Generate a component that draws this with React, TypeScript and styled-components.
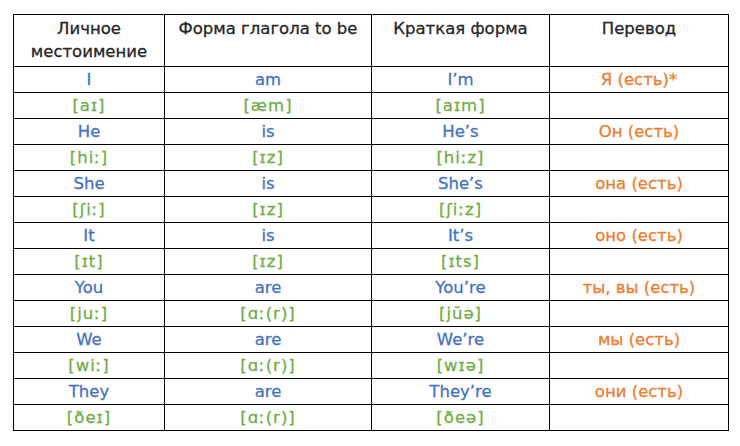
import styled, { createGlobalStyle } from 'styled-components';

const GlobalStyle = createGlobalStyle`
	html, body {
		margin: 0;
		padding: 0;
		background: #ffffff;
	}
	body {
		font-family: 'DejaVu Sans', Verdana, sans-serif;
	}
`;

type Tone = 'blue' | 'green' | 'orange';

const tones: Record<Tone, string> = {
	blue: '#4472c4',
	green: '#70ad47',
	orange: '#ed7d31',
};

const rows: [string, string, string, string][] = [
	['I', 'am', 'I’m', 'Я (есть)*'],
	['He', 'is', 'He’s', 'Он (есть)'],
	['She', 'is', 'She’s', 'она (есть)'],
	['It', 'is', 'It’s', 'оно (есть)'],
	['You', 'are', 'You’re', 'ты, вы (есть)'],
	['We', 'are', 'We’re', 'мы (есть)'],
	['They', 'are', 'They’re', 'они (есть)'],
];

const sounds: [string, string, string][] = [
	['[aɪ]', '[æm]', '[aɪm]'],
	['[hiː]', '[ɪz]', '[hiːz]'],
	['[ʃiː]', '[ɪz]', '[ʃiːz]'],
	['[ɪt]', '[ɪz]', '[ɪts]'],
	['[juː]', '[ɑː(r)]', '[jŭə]'],
	['[wiː]', '[ɑː(r)]', '[wɪə]'],
	['[ðeɪ]', '[ɑː(r)]', '[ðeə]'],
];

function App() {
	return (
		<>
			<GlobalStyle />
			<Page>
				<Table>
					<colgroup>
						<col style={{ width: 151 }} />
						<col style={{ width: 207 }} />
						<col style={{ width: 178 }} />
						<col style={{ width: 179 }} />
					</colgroup>
					<thead>
						<tr>
							<HeadCell>
								Личное
								<br />
								местоимение
							</HeadCell>
							<HeadCell>Форма глагола to be</HeadCell>
							<HeadCell>Краткая форма</HeadCell>
							<HeadCell>Перевод</HeadCell>
						</tr>
					</thead>
					<tbody>
						{rows.map((row, i) => (
							<Pair key={row[0]} word={row} sound={sounds[i]} />
						))}
					</tbody>
				</Table>
			</Page>
		</>
	);
}

function Pair({
	word,
	sound,
}: {
	word: [string, string, string, string];
	sound: [string, string, string];
}) {
	return (
		<>
			<tr>
				<Cell $tone='blue'>{word[0]}</Cell>
				<Cell $tone='blue'>{word[1]}</Cell>
				<Cell $tone='blue'>{word[2]}</Cell>
				<Cell $tone='orange'>{word[3]}</Cell>
			</tr>
			<tr>
				<Cell $tone='green' $spaced>{sound[0]}</Cell>
				<Cell $tone='green' $spaced>{sound[1]}</Cell>
				<Cell $tone='green' $spaced>{sound[2]}</Cell>
				<Cell $tone='green' />
			</tr>
		</>
	);
}

export default App;

const Page = styled.div`
	padding: 14px 0 0 13px;
	width: 740px;
	height: 446px;
	box-sizing: border-box;
`;

const Table = styled.table`
	border-collapse: collapse;
	table-layout: fixed;
	width: 716px;
	font-size: 16.5px;
	-webkit-text-stroke: 0.3px currentColor;
`;

const HeadCell = styled.th`
	height: 52px;
	padding: 2px 4px 0;
	border: 1px solid #000;
	vertical-align: top;
	text-align: center;
	font-weight: normal;
	line-height: 23px;
	color: #262626;
	box-sizing: border-box;
`;

const Cell = styled.td<{ $tone: Tone; $spaced?: boolean }>`
	height: 26px;
	padding: 0 4px;
	border: 1px solid #000;
	text-align: center;
	vertical-align: middle;
	line-height: 20px;
	color: ${(p) => tones[p.$tone]};
	letter-spacing: ${(p) => (p.$spaced ? '1px' : '0')};
	box-sizing: border-box;
`;
